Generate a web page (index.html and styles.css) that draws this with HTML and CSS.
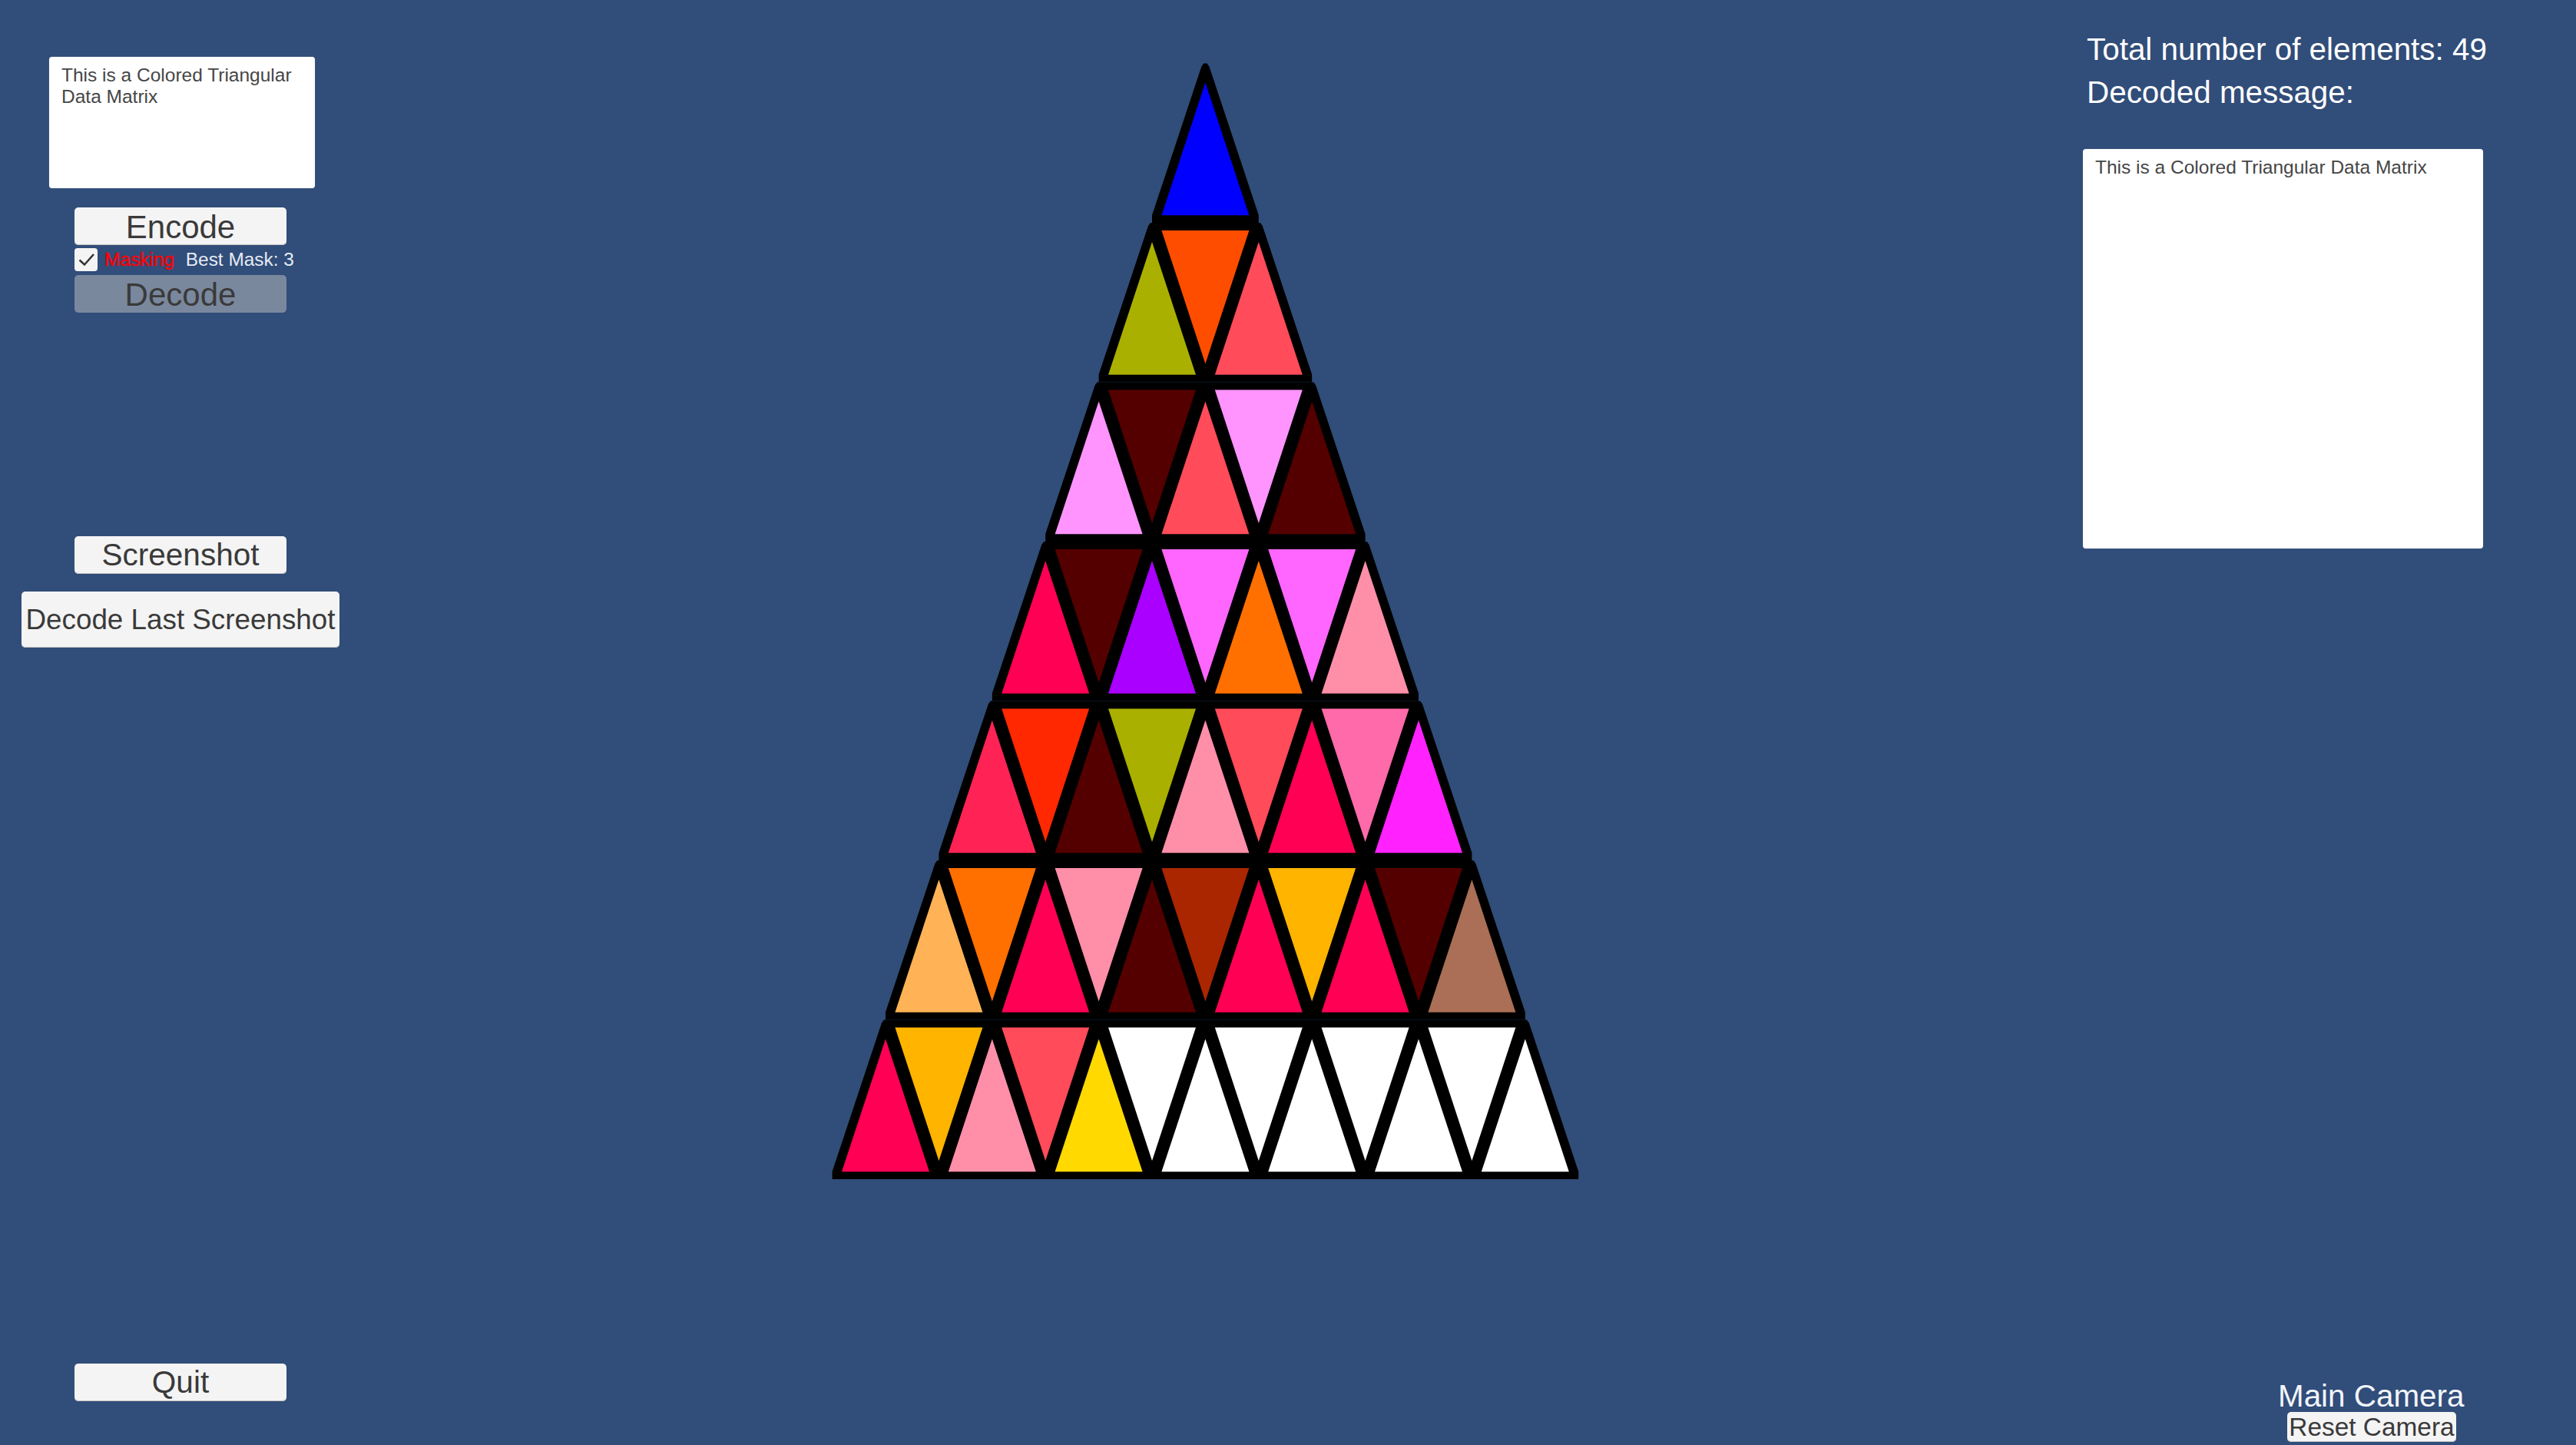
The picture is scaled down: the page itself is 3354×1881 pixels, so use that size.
FILE: index.html

```html
<!DOCTYPE html>
<html lang="en">
<head>
  <meta charset="UTF-8" />
  <title>Colored Triangular Data Matrix</title>
  <link rel="stylesheet" href="styles.css">
</head>
<body>
  <div class="page">
    <div class="left-panel">
      <div class="text-box input-box">This is a Colored Triangular Data Matrix</div>
      <button class="btn btn-encode">Encode</button>
      <div class="mask-row">
        <span class="check">
          <svg width="30" height="30" viewBox="0 0 30 30"><polyline points="6.5,15.5 13,21.5 25,8" /></svg>
        </span>
        <span class="mask-label">Masking</span>
        <span class="mask-best">Best Mask: 3</span>
      </div>
      <button class="btn btn-decode">Decode</button>
      <button class="btn btn-shot">Screenshot</button>
      <button class="btn btn-last">Decode Last Screenshot</button>
      <button class="btn btn-quit">Quit</button>
    </div>

    <svg class="matrix" width="980" height="1460" viewBox="0 0 980 1460">
      <defs>
        <polygon id="up" points="0,25 57,197.8 -57,197.8" />
        <polygon id="down" points="-57,10 57,10 0,183.5" />
      </defs>

      <!-- black outline, one band per row -->
      <g class="outline">
        <polygon points="487.4,2.5 491.4,2.5 494.4,6.5 558.8,200 558.8,210 420,210 420,200 484.4,6.5" />
        <polygon points="418,210 560.8,210 563.8,214 628.2,407.5 628.2,417.5 350.6,417.5 350.6,407.5 415,214" />
        <polygon points="348.6,417.5 630.2,417.5 633.2,421.5 697.6,615 697.6,625 281.2,625 281.2,615 345.6,421.5" />
        <polygon points="279.2,625 699.6,625 702.6,629 767,822.5 767,832.5 211.8,832.5 211.8,822.5 276.2,629" />
        <polygon points="209.8,832.5 769,832.5 772,836.5 836.4,1030 836.4,1040 142.4,1040 142.4,1030 206.8,836.5" />
        <polygon points="140.4,1040 838.4,1040 841.4,1044 905.8,1237.5 905.8,1247.5 73,1247.5 73,1237.5 137.4,1044" />
        <polygon points="71,1247.5 907.8,1247.5 910.8,1251.5 975.2,1445 975.2,1455 3.6,1455 3.6,1445 68,1251.5" />
      </g>

      <!-- row 1 -->
      <use href="#up" x="489.4" y="2.5" class="c-blue" />

      <!-- row 2 -->
      <use href="#up" x="420" y="210" class="c-olive" />
      <use href="#down" x="489.4" y="210" class="c-orange-red" />
      <use href="#up" x="558.8" y="210" class="c-coral" />

      <!-- row 3 -->
      <use href="#up" x="350.6" y="417.5" class="c-light-pink" />
      <use href="#down" x="420" y="417.5" class="c-maroon" />
      <use href="#up" x="489.4" y="417.5" class="c-coral" />
      <use href="#down" x="558.8" y="417.5" class="c-light-pink" />
      <use href="#up" x="628.2" y="417.5" class="c-maroon" />

      <!-- row 4 -->
      <use href="#up" x="281.2" y="625" class="c-rose" />
      <use href="#down" x="350.6" y="625" class="c-maroon" />
      <use href="#up" x="420" y="625" class="c-purple" />
      <use href="#down" x="489.4" y="625" class="c-orchid" />
      <use href="#up" x="558.8" y="625" class="c-orange" />
      <use href="#down" x="628.2" y="625" class="c-orchid" />
      <use href="#up" x="697.6" y="625" class="c-salmon" />

      <!-- row 5 -->
      <use href="#up" x="211.8" y="832.5" class="c-crimson" />
      <use href="#down" x="281.2" y="832.5" class="c-red" />
      <use href="#up" x="350.6" y="832.5" class="c-maroon" />
      <use href="#down" x="420" y="832.5" class="c-olive" />
      <use href="#up" x="489.4" y="832.5" class="c-salmon" />
      <use href="#down" x="558.8" y="832.5" class="c-coral" />
      <use href="#up" x="628.2" y="832.5" class="c-rose" />
      <use href="#down" x="697.6" y="832.5" class="c-hot-pink" />
      <use href="#up" x="767" y="832.5" class="c-magenta" />

      <!-- row 6 -->
      <use href="#up" x="142.4" y="1040" class="c-peach" />
      <use href="#down" x="211.8" y="1040" class="c-orange" />
      <use href="#up" x="281.2" y="1040" class="c-rose" />
      <use href="#down" x="350.6" y="1040" class="c-salmon" />
      <use href="#up" x="420" y="1040" class="c-maroon" />
      <use href="#down" x="489.4" y="1040" class="c-rust" />
      <use href="#up" x="558.8" y="1040" class="c-rose" />
      <use href="#down" x="628.2" y="1040" class="c-amber" />
      <use href="#up" x="697.6" y="1040" class="c-rose" />
      <use href="#down" x="767" y="1040" class="c-maroon" />
      <use href="#up" x="836.4" y="1040" class="c-brown" />

      <!-- row 7 -->
      <use href="#up" x="73" y="1247.5" class="c-rose" />
      <use href="#down" x="142.4" y="1247.5" class="c-amber" />
      <use href="#up" x="211.8" y="1247.5" class="c-salmon" />
      <use href="#down" x="281.2" y="1247.5" class="c-coral" />
      <use href="#up" x="350.6" y="1247.5" class="c-yellow" />
      <use href="#down" x="420" y="1247.5" class="c-white" />
      <use href="#up" x="489.4" y="1247.5" class="c-white" />
      <use href="#down" x="558.8" y="1247.5" class="c-white" />
      <use href="#up" x="628.2" y="1247.5" class="c-white" />
      <use href="#down" x="697.6" y="1247.5" class="c-white" />
      <use href="#up" x="767" y="1247.5" class="c-white" />
      <use href="#down" x="836.4" y="1247.5" class="c-white" />
      <use href="#up" x="905.8" y="1247.5" class="c-white" />
    </svg>

    <div class="right-panel">
      <div class="info-line">Total number of elements: 49</div>
      <div class="info-line">Decoded message:</div>
      <div class="text-box output-box">This is a Colored Triangular Data Matrix</div>
      <div class="camera">
        <div class="camera-name">Main Camera</div>
        <button class="btn btn-reset">Reset Camera</button>
      </div>
    </div>
  </div>
</body>
</html>
```

FILE: styles.css

```css
html, body {
  margin: 0;
  height: 100%;
  overflow: hidden;
}
body {
  background: #314d79;
  font-family: "Liberation Sans", Arial, sans-serif;
}
.page {
  display: flex;
  height: 1881px;
}

/* left column */
.left-panel {
  width: 470px;
  flex: none;
  display: flex;
  flex-direction: column;
  align-items: center;
  padding-top: 74px;
  box-sizing: border-box;
}
.text-box {
  background: #ffffff;
  color: #464646;
  font-size: 24.5px;
  line-height: 28px;
  padding: 10px 16px;
  border-radius: 4px;
  box-sizing: border-box;
  box-shadow: 0 0 1px #9aa3b0;
}
.input-box {
  width: 346px;
  height: 171px;
  margin-left: 4px;
}
.btn {
  display: block;
  background: #f4f4f4;
  color: #3a3a3a;
  font-family: inherit;
  font-size: 42px;
  line-height: 1;
  width: 276px;
  height: 49px;
  padding: 2px 0 0;
  border: none;
  border-radius: 5px;
  white-space: nowrap;
  box-shadow: inset 0 -1px 0 #c4c4c4;
}
.btn-encode {
  margin-top: 25px;
}
.mask-row {
  display: flex;
  align-items: center;
  align-self: flex-start;
  margin: 4px 0 0 97px;
  height: 30px;
  font-size: 24.4px;
  white-space: nowrap;
}
.check {
  width: 30px;
  height: 30px;
  background: #f4f4f4;
  border-radius: 4px;
  margin-right: 9px;
}
.check svg {
  display: block;
}
.check polyline {
  fill: none;
  stroke: #333333;
  stroke-width: 2.5;
}
.mask-label {
  color: #ff0000;
  -webkit-text-stroke: 0.4px #ff0000;
  margin-right: 15px;
}
.mask-best {
  color: #e6ebf3;
}
.btn-decode {
  margin-top: 5px;
  background: #7a889e;
  box-shadow: none;
}
.btn-shot {
  margin-top: 291px;
  font-size: 40.5px;
  padding-top: 0;
}
.btn-last {
  margin-top: 23px;
  width: 414px;
  height: 73px;
  font-size: 36.8px;
}
.btn-quit {
  margin-top: 932px;
  font-size: 40.5px;
  padding-top: 0;
}

/* triangle matrix */
.matrix {
  flex: none;
  margin: 80px 0 0 610px;
}
.outline polygon {
  fill: #000000;
}
.c-blue { fill: #0000ff; }
.c-olive { fill: #aab000; }
.c-orange-red { fill: #ff4d00; }
.c-coral { fill: #ff4b5a; }
.c-light-pink { fill: #ff94ff; }
.c-maroon { fill: #550000; }
.c-rose { fill: #ff0055; }
.c-purple { fill: #aa00ff; }
.c-orchid { fill: #ff66ff; }
.c-orange { fill: #ff7000; }
.c-salmon { fill: #ff8fa8; }
.c-crimson { fill: #ff2255; }
.c-red { fill: #ff2800; }
.c-hot-pink { fill: #ff6aaa; }
.c-magenta { fill: #ff22ff; }
.c-peach { fill: #ffb356; }
.c-rust { fill: #aa2600; }
.c-amber { fill: #ffb400; }
.c-brown { fill: #aa6f56; }
.c-yellow { fill: #ffd900; }
.c-white { fill: #ffffff; }

/* right column */
.right-panel {
  flex: 1;
  display: flex;
  flex-direction: column;
  padding: 36px 0 4px 652px;
  box-sizing: border-box;
  min-width: 0;
}
.info-line {
  color: #ffffff;
  font-size: 40.4px;
  line-height: 56px;
  padding-left: 5px;
  white-space: nowrap;
}
.output-box {
  width: 521px;
  height: 520px;
  margin-top: 46px;
}
.camera {
  margin: auto 0 0 254px;
  width: 242px;
}
.camera-name {
  color: #f2f5fa;
  font-size: 40.4px;
  line-height: 42px;
  white-space: nowrap;
}
.btn-reset {
  width: 220px;
  height: 39px;
  margin-left: 12px;
  padding: 0;
  font-size: 33.4px;
}
```
